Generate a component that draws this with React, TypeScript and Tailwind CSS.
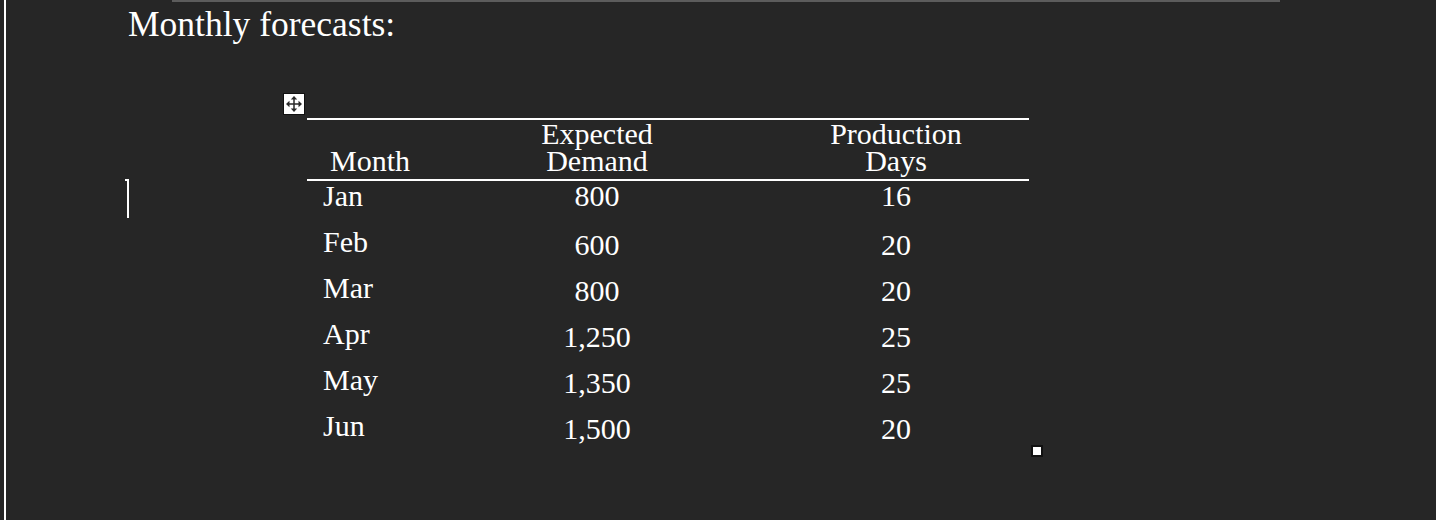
const rows = [
  { month: "Jan", demand: "800", days: "16" },
  { month: "Feb", demand: "600", days: "20" },
  { month: "Mar", demand: "800", days: "20" },
  { month: "Apr", demand: "1,250", days: "25" },
  { month: "May", demand: "1,350", days: "25" },
  { month: "Jun", demand: "1,500", days: "20" },
];

const serif = { fontFamily: '"Liberation Serif", "Times New Roman", serif' };

function MoveHandle() {
  return (
    <div className="w-[22px] h-[22px] shrink-0 bg-white border border-[#111] flex items-center justify-center">
      <svg width="16" height="16" viewBox="0 0 16 16" fill="#2a2a2a">
        <rect x="7.25" y="2.5" width="1.5" height="11" />
        <rect x="2.5" y="7.25" width="11" height="1.5" />
        <polygon points="8,0 4.8,3.5 11.2,3.5" />
        <polygon points="8,16 4.8,12.5 11.2,12.5" />
        <polygon points="0,8 3.5,4.8 3.5,11.2" />
        <polygon points="16,8 12.5,4.8 12.5,11.2" />
      </svg>
    </div>
  );
}

export default function App() {
  return (
    <div
      className="relative w-[1436px] h-[520px] bg-[#262626] flex overflow-hidden text-white"
      style={serif}
    >
      <div className="w-[4px] shrink-0" />
      <div className="w-[2px] shrink-0 bg-white" />

      <div className="flex-1 flex flex-col">
        {/* ruler strip */}
        <div className="ml-[166px] w-[1108px] h-[2px] bg-[#5c5c5c]" />

        <p className="mt-[2px] pl-[122px] text-[35.5px] leading-[40px]">
          Monthly forecasts:
        </p>

        <div className="flex items-start mt-[49px] pl-[277px]">
          <MoveHandle />

          <div className="relative ml-[2px] mt-[25px] w-[722px] border-t-2 border-white text-[30px]">
            {/* header */}
            <div className="grid grid-cols-[150px_280px_292px] border-b-2 border-white pb-[5px] leading-[27px]">
              <div className="pl-[23px] flex items-end">Month</div>
              <div className="text-center">
                Expected
                <br />
                Demand
              </div>
              <div className="pl-[26px] text-center">
                Production
                <br />
                Days
              </div>
            </div>

            {/* body */}
            {rows.map((r, i) => (
              <div
                key={r.month}
                className="grid grid-cols-[150px_280px_292px] h-[46px] leading-[30px]"
              >
                <div className="pl-[16px]">{r.month}</div>
                <div className={i === 0 ? "text-center" : "text-center pt-[3px]"}>
                  {r.demand}
                </div>
                <div className={i === 0 ? "pl-[26px] text-center" : "pl-[26px] text-center pt-[3px]"}>
                  {r.days}
                </div>
              </div>
            ))}

            {/* resize handle */}
            <div className="absolute -right-[14px] bottom-[0px] w-[12px] h-[12px] bg-white border-2 border-[#111]" />
          </div>
        </div>
      </div>

      {/* text caret */}
      <div className="absolute left-[125px] top-[179px] flex items-start">
        <div className="w-[2px] h-[2px] bg-white" />
        <div className="w-[2px] h-[39px] bg-white" />
      </div>
    </div>
  );
}
